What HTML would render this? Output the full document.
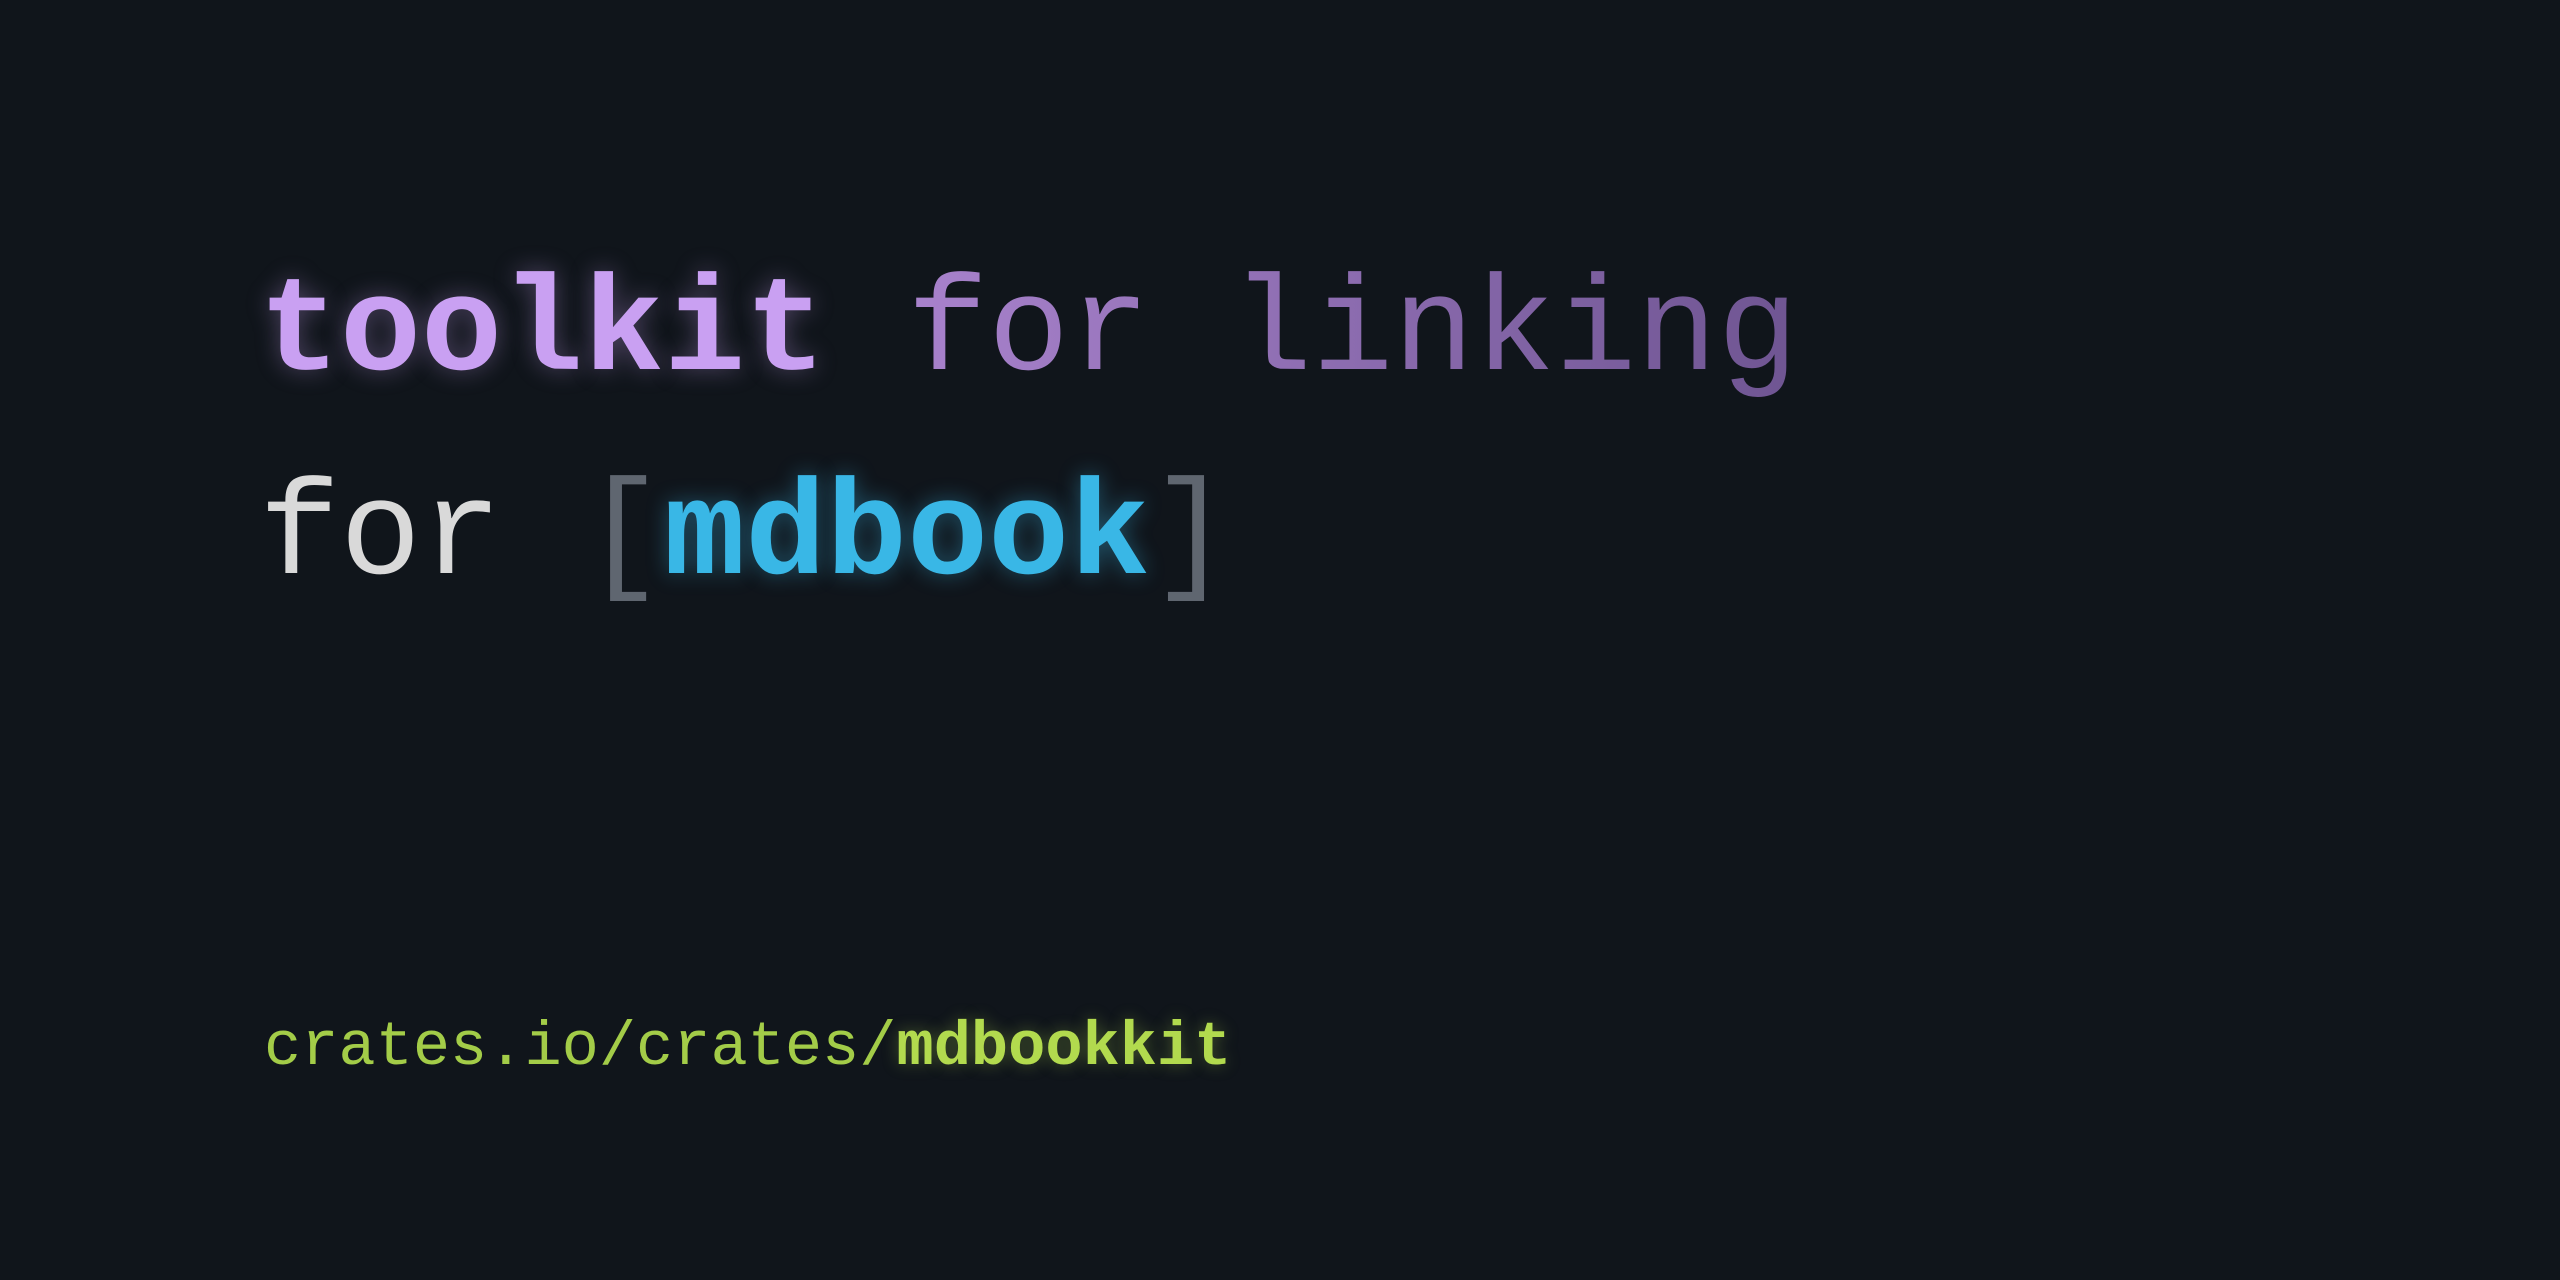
<!DOCTYPE html>
<html><head><meta charset="utf-8"><style>
html,body{margin:0;padding:0;}
body{width:2560px;height:1280px;background:#10151b;overflow:hidden;position:relative;font-family:"Liberation Mono",monospace;}
.l{position:absolute;left:259px;white-space:pre;line-height:1;}
.l1{top:266px;font-size:135px;}
.l2{top:470px;font-size:135px;}
.l3{top:1017px;left:264px;font-size:62px;}
.b{font-weight:bold;}
.tk{color:#c9a0f2;text-shadow:0 0 24px rgba(201,160,242,0.35);}
.fl{background:linear-gradient(90deg,#a882cc,#6f5592);-webkit-background-clip:text;background-clip:text;color:transparent;}
.fw{color:#d9d9d9;}
.br{color:#5f6670;}
.md{color:#39b7e6;text-shadow:0 0 22px rgba(57,183,230,0.4);}
.cr{color:#a3cc48;}
.ck{color:#b2da4e;text-shadow:0 0 16px rgba(178,218,78,0.35);}
</style></head><body>
<div class="l l1"><span class="b tk">toolkit</span> <span class="fl">for linking</span></div>
<div class="l l2"><span class="fw">for</span> <span class="br">[</span><span class="b md">mdbook</span><span class="br">]</span></div>
<div class="l l3"><span class="cr">crates.io/crates/</span><span class="b ck">mdbookkit</span></div>
</body></html>
